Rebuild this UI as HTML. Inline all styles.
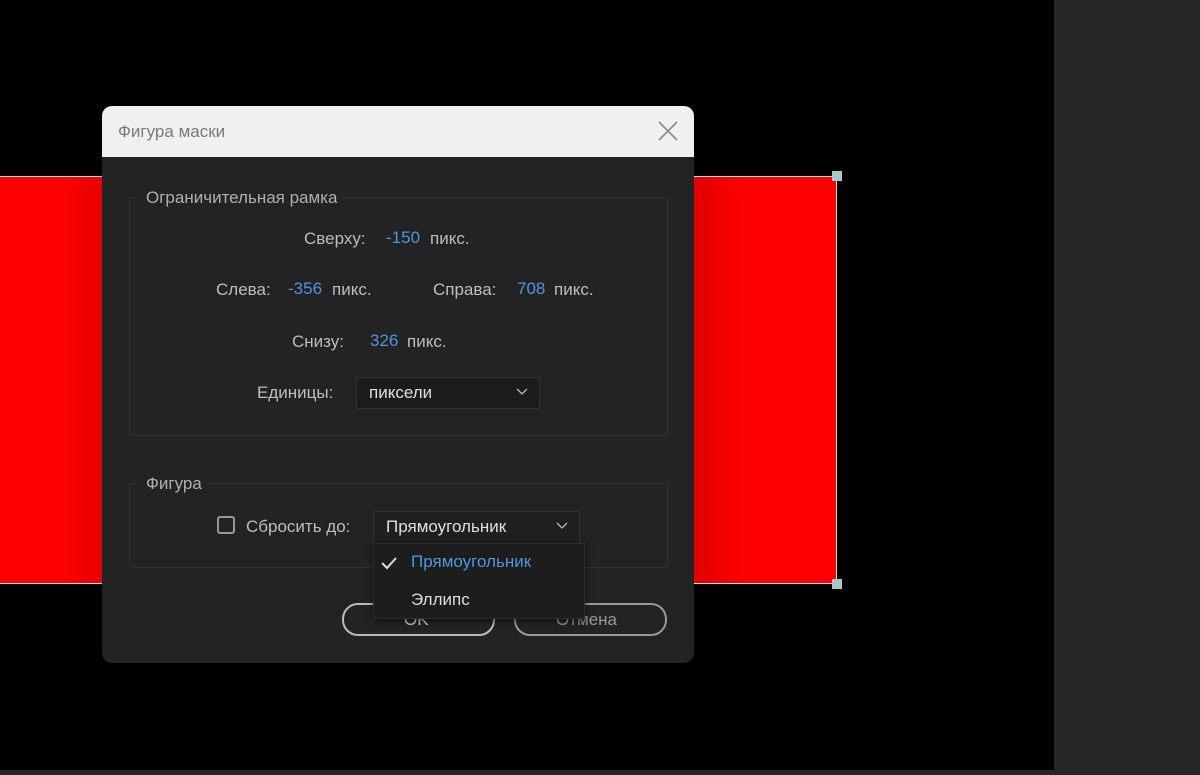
<!DOCTYPE html>
<html><head><meta charset="utf-8"><style>
body{margin:0;width:1200px;height:775px;background:#000;position:relative;overflow:hidden;font-family:"Segoe UI","Liberation Sans","DejaVu Sans",sans-serif;}
.a{position:absolute;}
.t{position:absolute;font-size:17px;color:#bdbdbd;white-space:nowrap;line-height:20px;}
.b{color:#4f95e0;}
</style></head><body>
<div class="a" style="left:1054px;top:0;width:146px;height:775px;background:#262626"></div>
<div class="a" style="left:0;top:770px;width:1200px;height:5px;background:#262626"></div>
<div class="a" style="left:0;top:176px;width:837px;height:408px;background:#ff0000;border-top:1px solid #ddd;border-bottom:1px solid #ddd;border-right:1px solid #ddd;box-sizing:border-box"></div>
<div class="a" style="left:694px;top:177px;width:50px;height:406px;background:linear-gradient(90deg,#e00000,#ff0000)"></div>
<div class="a" style="left:60px;top:177px;width:42px;height:406px;background:linear-gradient(90deg,#ff0000,#e80000)"></div>
<div class="a" style="left:832px;top:171px;width:10px;height:10px;background:#a9c6c6"></div>
<div class="a" style="left:832px;top:579px;width:10px;height:10px;background:#a9c6c6"></div>

<div class="a" style="left:102px;top:106px;width:592px;height:557px;background:#232323;border-radius:10px;overflow:hidden">
 <div class="a" style="left:0;top:0;width:592px;height:51px;background:#f0f0f0"></div>
 <div class="t" style="left:16px;top:16px;color:#7a7a7a">Фигура маски</div>
 <svg class="a" style="left:555px;top:14px" width="22" height="22"><path d="M2 2L20 20M20 2L2 20" stroke="#888" stroke-width="1.6"/></svg>
 <div class="a" style="left:27px;top:91px;width:537px;height:237px;border:1px solid #333;border-radius:3px"></div>
 <div class="t" style="left:38px;top:82px;background:#232323;padding:0 6px;color:#b0b0b0">Ограничительная рамка</div>
 <div class="t" style="left:202px;top:123px">Сверху:</div><div class="t b" style="left:284px;top:122px">-150</div><div class="t" style="left:328px;top:123px">пикс.</div>
 <div class="t" style="left:114px;top:174px">Слева:</div><div class="t b" style="left:186px;top:173px">-356</div><div class="t" style="left:230px;top:174px">пикс.</div>
 <div class="t" style="left:331px;top:174px">Справа:</div><div class="t b" style="left:415px;top:173px">708</div><div class="t" style="left:452px;top:174px">пикс.</div>
 <div class="t" style="left:190px;top:226px">Снизу:</div><div class="t b" style="left:268px;top:225px">326</div><div class="t" style="left:305px;top:226px">пикс.</div>
 <div class="t" style="left:155px;top:277px">Единицы:</div>
 <div class="a" style="left:254px;top:271px;width:182px;height:30px;background:#1c1c1c;border:1px solid #333;border-radius:2px"></div>
 <div class="t" style="left:267px;top:277px;color:#e0e0e0">пиксели</div>
 <svg class="a" style="left:414px;top:282px" width="12" height="8"><path d="M1 1L6 6L11 1" stroke="#bbb" fill="none" stroke-width="1.3"/></svg>
 <div class="a" style="left:27px;top:377px;width:537px;height:83px;border:1px solid #333;border-radius:3px"></div>
 <div class="t" style="left:38px;top:368px;background:#232323;padding:0 6px;color:#b0b0b0">Фигура</div>
 <div class="a" style="left:115px;top:410px;width:18px;height:18px;border:2px solid #999;border-radius:3px;box-sizing:border-box"></div>
 <div class="t" style="left:144px;top:411px">Сбросить до:</div>
 <div class="a" style="left:271px;top:405px;width:205px;height:31px;background:#1f1f1f;border:1px solid #333;border-radius:2px"></div>
 <div class="t" style="left:284px;top:411px;color:#e0e0e0">Прямоугольник</div>
 <svg class="a" style="left:454px;top:416px" width="12" height="8"><path d="M1 1L6 6L11 1" stroke="#bbb" fill="none" stroke-width="1.3"/></svg>
 <div class="a" style="left:240px;top:497px;width:153px;height:33px;border:2px solid #bbb;border-radius:16px;box-sizing:border-box"></div>
 <div class="t" style="left:302px;top:504px;color:#ccc">OK</div>
 <div class="a" style="left:412px;top:497px;width:153px;height:33px;border:2px solid #999;border-radius:16px;box-sizing:border-box"></div>
 <div class="t" style="left:454px;top:504px;color:#999">Отмена</div>
 <div class="a" style="left:271px;top:437px;width:210px;height:74px;background:#1d1d1d;border:1px solid #2e2e2e;box-shadow:0 2px 6px rgba(0,0,0,.6)"></div>
 <svg class="a" style="left:279px;top:450px" width="16" height="14"><path d="M1 7L6 12L15 2" stroke="#ddd" fill="none" stroke-width="2"/></svg>
 <div class="t" style="left:309px;top:446px;color:#4f95e0">Прямоугольник</div>
 <div class="t" style="left:309px;top:484px;color:#ddd">Эллипс</div>
</div>
</body></html>
